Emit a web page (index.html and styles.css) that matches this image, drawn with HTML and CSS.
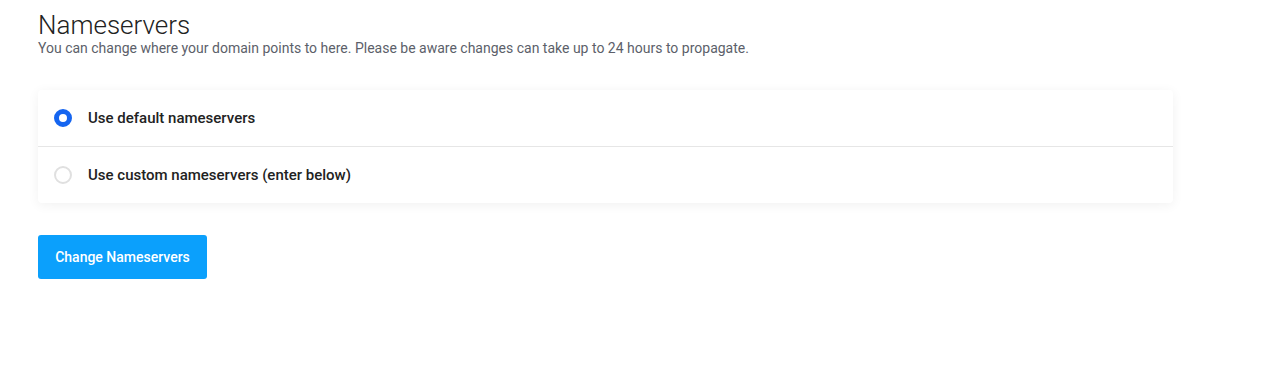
FILE: index.html
```html
<html>

<head>
  <link rel="stylesheet" href="styles.css">
</head>

<body>
  <div class="page">
    <h2 class="title">Nameservers</h2>
    <p class="subtitle">You can change where your domain points to here. Please be aware changes can take up to 24 hours to propagate.</p>

    <div class="options">
      <label class="option">
        <span class="radio checked"></span>
        <span class="option-text">Use default nameservers</span>
      </label>
      <label class="option">
        <span class="radio"></span>
        <span class="option-text">Use custom nameservers (enter below)</span>
      </label>
    </div>

    <button class="btn">Change Nameservers</button>
  </div>
</body>

</html>
```

FILE: styles.css
```css
body {
  margin: 0;
  font-family: Roboto, "Liberation Sans", sans-serif;
  background: #fff;
}

.page {
  width: 1135px;
  padding: 10px 38px 0;
}

.title {
  margin: 0;
  font-size: 26px;
  font-weight: 300;
  line-height: 30px;
  color: #222;
}

.subtitle {
  margin: 0;
  font-size: 14px;
  line-height: 16px;
  color: #5c5f6a;
}

.options {
  margin-top: 34px;
  background: #fff;
  border-radius: 4px;
  box-shadow: 0 2px 12px rgba(0, 0, 0, 0.06);
}

.option {
  display: flex;
  align-items: center;
  height: 56px;
  padding: 0 16px;
}

.option + .option {
  border-top: 1px solid #e6e6e6;
}

.radio {
  width: 18px;
  height: 18px;
  box-sizing: border-box;
  border: 2px solid #e0e0e0;
  border-radius: 50%;
  margin-right: 16px;
}

.radio.checked {
  border: 5px solid #1565f0;
}

.option-text {
  font-size: 15px;
  font-weight: 500;
  color: #222;
}

.btn {
  margin-top: 32px;
  width: 169px;
  height: 44px;
  border: 0;
  border-radius: 3px;
  background: #0ba0fc;
  color: #fff;
  font-family: Roboto, "Liberation Sans", sans-serif;
  font-size: 14px;
  font-weight: 500;
}
```
